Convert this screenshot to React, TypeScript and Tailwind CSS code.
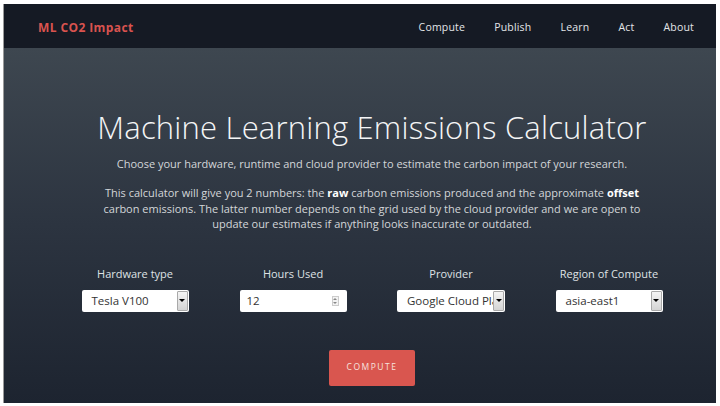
import React from "react";

const font = { fontFamily: '"Open Sans", "Noto Sans", sans-serif' };

function SelectBox({ value, width }: { value: string; width: string }) {
  return (
    <div className={`flex h-[22px] ${width} items-stretch rounded-[2px] bg-white text-left text-[11.5px] text-[#333]`}>
      <div className="flex-1 overflow-hidden whitespace-nowrap pl-[10px] leading-[22px]">{value}</div>
      <div className="my-[1px] mr-[1px] flex w-[11px] items-center justify-center rounded-[1px] border border-[#a9a9a9] bg-gradient-to-b from-[#f4f4f4] to-[#d4d4d4]">
        <div className="h-0 w-0 border-x-[3px] border-t-[3px] border-x-transparent border-t-black" />
      </div>
    </div>
  );
}

function NumberBox({ value }: { value: string }) {
  return (
    <div className="flex h-[22px] w-[107px] items-center rounded-[2px] bg-white text-left text-[11.5px] text-[#333]">
      <div className="flex-1 pl-[7px]">{value}</div>
      <div className="mr-[8px] flex h-[10px] w-[7px] flex-col items-center justify-center gap-[2px] border border-[#ccc] bg-[#f3f3f3]">
        <div className="h-0 w-0 border-x-[2px] border-b-[2px] border-x-transparent border-b-[#888]" />
        <div className="h-0 w-0 border-x-[2px] border-t-[2px] border-x-transparent border-t-[#888]" />
      </div>
    </div>
  );
}

function Field({ label, children }: { label: string; children: React.ReactNode }) {
  return (
    <div className="flex flex-col items-center gap-[8px]">
      <label className="text-[11px] leading-[16px] text-[#dfe2e5]">{label}</label>
      {children}
    </div>
  );
}

export default function App() {
  return (
    <div className="h-[406px] w-[720px] bg-white pb-[3px] pl-[3px] pr-[4px] pt-[4px]" style={font}>
      <div className="flex h-full w-full flex-col overflow-hidden border-l border-[#9a9a9a]">
        <nav className="flex h-[44px] shrink-0 items-center bg-[#151a24] pl-[34px] pr-[22px] pt-[3px]">
          <span className="text-[12px] font-bold tracking-[0.4px] text-[#d9534f]">ML CO2 Impact</span>
          <div className="ml-auto flex items-center gap-[29px] text-[10.5px] tracking-[0.2px] text-[#e3e5e8]">
            <span>Compute</span>
            <span>Publish</span>
            <span>Learn</span>
            <span>Act</span>
            <span>About</span>
          </div>
        </nav>
        <main className="flex flex-1 flex-col items-center bg-gradient-to-b from-[#3e4750] via-[#2c3440] to-[#1d2430] pl-[24px] text-center">
          <h1 className="mt-[59px] text-[31px] font-light leading-[40px] tracking-[0.2px] text-[#f4f5f6]">
            Machine Learning Emissions Calculator
          </h1>
          <p className="mt-[9px] text-[11px] leading-[15px] text-[#d3d6d9]">
            Choose your hardware, runtime and cloud provider to estimate the carbon impact of your research.
          </p>
          <p className="mt-[14px] w-[545px] text-[11px] leading-[15.5px] text-[#d3d6d9]">
            This calculator will give you 2 numbers: the <b className="text-white">raw</b> carbon emissions produced and the approximate{" "}
            <b className="text-white">offset</b> carbon emissions. The latter number depends on the grid used by the cloud provider and we are open to update our estimates if anything looks inaccurate or outdated.
          </p>
          <div className="mt-[34px] grid w-[632px] grid-cols-4">
            <Field label="Hardware type">
              <SelectBox value="Tesla V100" width="w-[107px]" />
            </Field>
            <Field label="Hours Used">
              <NumberBox value="12" />
            </Field>
            <Field label="Provider">
              <SelectBox value="Google Cloud Platform" width="w-[108px]" />
            </Field>
            <Field label="Region of Compute">
              <SelectBox value="asia-east1" width="w-[107px]" />
            </Field>
          </div>
          <button className="mt-[38px] h-[36px] w-[86px] rounded-[2px] bg-[#d9564f] text-[8.5px] tracking-[1.5px] text-[#f6e3df]">
            COMPUTE
          </button>
        </main>
      </div>
    </div>
  );
}
